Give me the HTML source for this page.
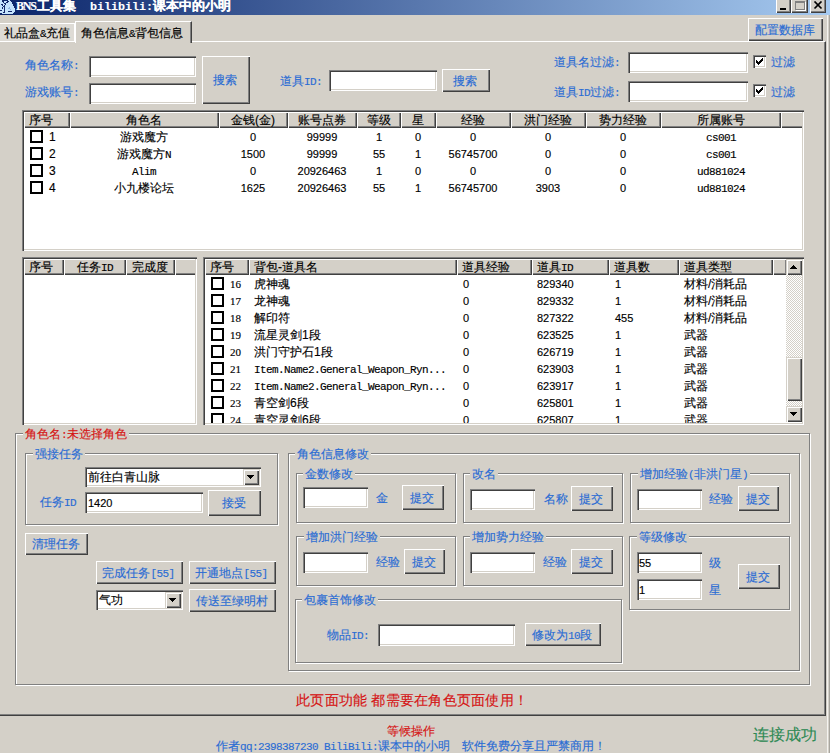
<!DOCTYPE html><html><head><meta charset="utf-8"><style>
html,body{margin:0;padding:0}
body{width:830px;height:753px;overflow:hidden;background:#d4d0c8;position:relative;font-family:"Liberation Sans",sans-serif;font-size:12px;color:#000}
.a{position:absolute;box-sizing:border-box}
.t{white-space:nowrap;line-height:14px;font-size:12px;-webkit-text-stroke:0.15px currentColor}
.blue{color:#2a6cd4}
.red{color:#d41414}
.tb{background:#fff;box-shadow:inset 1px 1px #808080,inset 2px 2px #404040,inset -1px -1px #fff,inset -2px -2px #d4d0c8}
.btn{background:#d4d0c8;box-shadow:inset 1px 1px #fff,inset -1px -1px #404040,inset -2px -2px #808080}
.grp{border:1px solid #808080;box-shadow:1px 1px #fff,inset 1px 1px #fff}
.gt{background:#d4d0c8}
.chk{background:#fff;border:2px solid #000}
.mono{font-family:"Liberation Mono",monospace;font-size:10px}
.sbtn{background:#d4d0c8;box-shadow:inset 1px 1px #d4d0c8,inset 2px 2px #fff,inset -1px -1px #404040,inset -2px -2px #808080}
.hdr{background:#d4d0c8;box-shadow:inset 1px 1px #fff,inset -1px -1px #404040,inset -2px -2px #808080}
.hdrl{background:#d4d0c8;box-shadow:inset 1px 1px #fff,inset 0 -1px #404040,inset 0 -2px #808080}
</style></head><body>

<div class="a " style="left:0px;top:0px;width:830px;height:15px;background:linear-gradient(to right,#0a246a,#a6caf0)"></div>
<svg class="a" style="left:0;top:0" width="15" height="14" shape-rendering="crispEdges"><rect x="0" y="0" width="1" height="1" fill="#c4e2fc"/><rect x="1" y="0" width="1" height="1" fill="#c4e2fc"/><rect x="2" y="0" width="1" height="1" fill="#14286a"/><rect x="8" y="0" width="1" height="1" fill="#c4e2fc"/><rect x="9" y="0" width="1" height="1" fill="#c4e2fc"/><rect x="0" y="1" width="1" height="1" fill="#c4e2fc"/><rect x="1" y="1" width="1" height="1" fill="#c4e2fc"/><rect x="2" y="1" width="1" height="1" fill="#14286a"/><rect x="3" y="1" width="1" height="1" fill="#14286a"/><rect x="4" y="1" width="1" height="1" fill="#c4e2fc"/><rect x="5" y="1" width="1" height="1" fill="#c4e2fc"/><rect x="6" y="1" width="1" height="1" fill="#c4e2fc"/><rect x="7" y="1" width="1" height="1" fill="#14286a"/><rect x="8" y="1" width="1" height="1" fill="#14286a"/><rect x="9" y="1" width="1" height="1" fill="#c4e2fc"/><rect x="10" y="1" width="1" height="1" fill="#c4e2fc"/><rect x="0" y="2" width="1" height="1" fill="#c4e2fc"/><rect x="1" y="2" width="1" height="1" fill="#c4e2fc"/><rect x="2" y="2" width="1" height="1" fill="#c4e2fc"/><rect x="3" y="2" width="1" height="1" fill="#14286a"/><rect x="4" y="2" width="1" height="1" fill="#c4e2fc"/><rect x="5" y="2" width="1" height="1" fill="#c4e2fc"/><rect x="6" y="2" width="1" height="1" fill="#14286a"/><rect x="7" y="2" width="1" height="1" fill="#14286a"/><rect x="8" y="2" width="1" height="1" fill="#c4e2fc"/><rect x="9" y="2" width="1" height="1" fill="#c4e2fc"/><rect x="10" y="2" width="1" height="1" fill="#c4e2fc"/><rect x="11" y="2" width="1" height="1" fill="#c4e2fc"/><rect x="0" y="3" width="1" height="1" fill="#c4e2fc"/><rect x="1" y="3" width="1" height="1" fill="#c4e2fc"/><rect x="2" y="3" width="1" height="1" fill="#c4e2fc"/><rect x="3" y="3" width="1" height="1" fill="#c4e2fc"/><rect x="4" y="3" width="1" height="1" fill="#14286a"/><rect x="5" y="3" width="1" height="1" fill="#14286a"/><rect x="6" y="3" width="1" height="1" fill="#c4e2fc"/><rect x="7" y="3" width="1" height="1" fill="#c4e2fc"/><rect x="8" y="3" width="1" height="1" fill="#c4e2fc"/><rect x="9" y="3" width="1" height="1" fill="#c4e2fc"/><rect x="10" y="3" width="1" height="1" fill="#c4e2fc"/><rect x="11" y="3" width="1" height="1" fill="#c4e2fc"/><rect x="0" y="4" width="1" height="1" fill="#c4e2fc"/><rect x="1" y="4" width="1" height="1" fill="#14286a"/><rect x="2" y="4" width="1" height="1" fill="#14286a"/><rect x="3" y="4" width="1" height="1" fill="#c4e2fc"/><rect x="4" y="4" width="1" height="1" fill="#c4e2fc"/><rect x="5" y="4" width="1" height="1" fill="#14286a"/><rect x="6" y="4" width="1" height="1" fill="#c4e2fc"/><rect x="7" y="4" width="1" height="1" fill="#c4e2fc"/><rect x="8" y="4" width="1" height="1" fill="#c4e2fc"/><rect x="9" y="4" width="1" height="1" fill="#c4e2fc"/><rect x="10" y="4" width="1" height="1" fill="#c4e2fc"/><rect x="11" y="4" width="1" height="1" fill="#c4e2fc"/><rect x="12" y="4" width="1" height="1" fill="#c4e2fc"/><rect x="0" y="5" width="1" height="1" fill="#c4e2fc"/><rect x="1" y="5" width="1" height="1" fill="#c4e2fc"/><rect x="2" y="5" width="1" height="1" fill="#14286a"/><rect x="3" y="5" width="1" height="1" fill="#c4e2fc"/><rect x="4" y="5" width="1" height="1" fill="#14286a"/><rect x="5" y="5" width="1" height="1" fill="#c4e2fc"/><rect x="6" y="5" width="1" height="1" fill="#c4e2fc"/><rect x="7" y="5" width="1" height="1" fill="#c4e2fc"/><rect x="8" y="5" width="1" height="1" fill="#c4e2fc"/><rect x="9" y="5" width="1" height="1" fill="#c4e2fc"/><rect x="10" y="5" width="1" height="1" fill="#c4e2fc"/><rect x="11" y="5" width="1" height="1" fill="#c4e2fc"/><rect x="12" y="5" width="1" height="1" fill="#c4e2fc"/><rect x="0" y="6" width="1" height="1" fill="#c4e2fc"/><rect x="1" y="6" width="1" height="1" fill="#c4e2fc"/><rect x="2" y="6" width="1" height="1" fill="#c4e2fc"/><rect x="3" y="6" width="1" height="1" fill="#14286a"/><rect x="4" y="6" width="1" height="1" fill="#14286a"/><rect x="5" y="6" width="1" height="1" fill="#c4e2fc"/><rect x="6" y="6" width="1" height="1" fill="#c4e2fc"/><rect x="7" y="6" width="1" height="1" fill="#c4e2fc"/><rect x="8" y="6" width="1" height="1" fill="#c4e2fc"/><rect x="9" y="6" width="1" height="1" fill="#c4e2fc"/><rect x="10" y="6" width="1" height="1" fill="#c4e2fc"/><rect x="11" y="6" width="1" height="1" fill="#c4e2fc"/><rect x="12" y="6" width="1" height="1" fill="#c4e2fc"/><rect x="13" y="6" width="1" height="1" fill="#c4e2fc"/><rect x="0" y="7" width="1" height="1" fill="#c4e2fc"/><rect x="1" y="7" width="1" height="1" fill="#c4e2fc"/><rect x="2" y="7" width="1" height="1" fill="#14286a"/><rect x="3" y="7" width="1" height="1" fill="#c4e2fc"/><rect x="4" y="7" width="1" height="1" fill="#14286a"/><rect x="5" y="7" width="1" height="1" fill="#c4e2fc"/><rect x="6" y="7" width="1" height="1" fill="#c4e2fc"/><rect x="7" y="7" width="1" height="1" fill="#c4e2fc"/><rect x="8" y="7" width="1" height="1" fill="#c4e2fc"/><rect x="9" y="7" width="1" height="1" fill="#8fb4e0"/><rect x="10" y="7" width="1" height="1" fill="#c4e2fc"/><rect x="11" y="7" width="1" height="1" fill="#c4e2fc"/><rect x="12" y="7" width="1" height="1" fill="#c4e2fc"/><rect x="13" y="7" width="1" height="1" fill="#c4e2fc"/><rect x="0" y="8" width="1" height="1" fill="#c4e2fc"/><rect x="1" y="8" width="1" height="1" fill="#c4e2fc"/><rect x="2" y="8" width="1" height="1" fill="#14286a"/><rect x="3" y="8" width="1" height="1" fill="#c4e2fc"/><rect x="4" y="8" width="1" height="1" fill="#14286a"/><rect x="5" y="8" width="1" height="1" fill="#c4e2fc"/><rect x="6" y="8" width="1" height="1" fill="#c4e2fc"/><rect x="7" y="8" width="1" height="1" fill="#c4e2fc"/><rect x="8" y="8" width="1" height="1" fill="#8fb4e0"/><rect x="9" y="8" width="1" height="1" fill="#8fb4e0"/><rect x="10" y="8" width="1" height="1" fill="#c4e2fc"/><rect x="11" y="8" width="1" height="1" fill="#c4e2fc"/><rect x="12" y="8" width="1" height="1" fill="#c4e2fc"/><rect x="13" y="8" width="1" height="1" fill="#c4e2fc"/><rect x="14" y="8" width="1" height="1" fill="#c4e2fc"/><rect x="0" y="9" width="1" height="1" fill="#c4e2fc"/><rect x="1" y="9" width="1" height="1" fill="#c4e2fc"/><rect x="2" y="9" width="1" height="1" fill="#c4e2fc"/><rect x="3" y="9" width="1" height="1" fill="#c4e2fc"/><rect x="4" y="9" width="1" height="1" fill="#14286a"/><rect x="5" y="9" width="1" height="1" fill="#c4e2fc"/><rect x="6" y="9" width="1" height="1" fill="#c4e2fc"/><rect x="7" y="9" width="1" height="1" fill="#c4e2fc"/><rect x="8" y="9" width="1" height="1" fill="#c4e2fc"/><rect x="9" y="9" width="1" height="1" fill="#c4e2fc"/><rect x="10" y="9" width="1" height="1" fill="#8fb4e0"/><rect x="11" y="9" width="1" height="1" fill="#c4e2fc"/><rect x="12" y="9" width="1" height="1" fill="#c4e2fc"/><rect x="13" y="9" width="1" height="1" fill="#c4e2fc"/><rect x="14" y="9" width="1" height="1" fill="#c4e2fc"/><rect x="0" y="10" width="1" height="1" fill="#14286a"/><rect x="1" y="10" width="1" height="1" fill="#14286a"/><rect x="2" y="10" width="1" height="1" fill="#c4e2fc"/><rect x="3" y="10" width="1" height="1" fill="#c4e2fc"/><rect x="4" y="10" width="1" height="1" fill="#14286a"/><rect x="5" y="10" width="1" height="1" fill="#c4e2fc"/><rect x="6" y="10" width="1" height="1" fill="#c4e2fc"/><rect x="7" y="10" width="1" height="1" fill="#c4e2fc"/><rect x="8" y="10" width="1" height="1" fill="#c4e2fc"/><rect x="9" y="10" width="1" height="1" fill="#c4e2fc"/><rect x="10" y="10" width="1" height="1" fill="#c4e2fc"/><rect x="11" y="10" width="1" height="1" fill="#c4e2fc"/><rect x="12" y="10" width="1" height="1" fill="#c4e2fc"/><rect x="13" y="10" width="1" height="1" fill="#c4e2fc"/><rect x="14" y="10" width="1" height="1" fill="#c4e2fc"/><rect x="0" y="11" width="1" height="1" fill="#c4e2fc"/><rect x="1" y="11" width="1" height="1" fill="#c4e2fc"/><rect x="2" y="11" width="1" height="1" fill="#c4e2fc"/><rect x="3" y="11" width="1" height="1" fill="#c4e2fc"/><rect x="4" y="11" width="1" height="1" fill="#14286a"/><rect x="5" y="11" width="1" height="1" fill="#c4e2fc"/><rect x="6" y="11" width="1" height="1" fill="#c4e2fc"/><rect x="7" y="11" width="1" height="1" fill="#c4e2fc"/><rect x="8" y="11" width="1" height="1" fill="#14286a"/><rect x="9" y="11" width="1" height="1" fill="#14286a"/><rect x="10" y="11" width="1" height="1" fill="#14286a"/><rect x="11" y="11" width="1" height="1" fill="#14286a"/><rect x="12" y="11" width="1" height="1" fill="#c4e2fc"/><rect x="13" y="11" width="1" height="1" fill="#c4e2fc"/><rect x="14" y="11" width="1" height="1" fill="#c4e2fc"/><rect x="0" y="12" width="1" height="1" fill="#c4e2fc"/><rect x="1" y="12" width="1" height="1" fill="#c4e2fc"/><rect x="2" y="12" width="1" height="1" fill="#c4e2fc"/><rect x="3" y="12" width="1" height="1" fill="#14286a"/><rect x="4" y="12" width="1" height="1" fill="#14286a"/><rect x="5" y="12" width="1" height="1" fill="#c4e2fc"/><rect x="6" y="12" width="1" height="1" fill="#c4e2fc"/><rect x="7" y="12" width="1" height="1" fill="#c4e2fc"/><rect x="8" y="12" width="1" height="1" fill="#c4e2fc"/><rect x="9" y="12" width="1" height="1" fill="#c4e2fc"/><rect x="10" y="12" width="1" height="1" fill="#c4e2fc"/><rect x="11" y="12" width="1" height="1" fill="#c4e2fc"/><rect x="12" y="12" width="1" height="1" fill="#c4e2fc"/><rect x="13" y="12" width="1" height="1" fill="#c4e2fc"/><rect x="2" y="13" width="1" height="1" fill="#c4e2fc"/><rect x="3" y="13" width="1" height="1" fill="#c4e2fc"/><rect x="4" y="13" width="1" height="1" fill="#c4e2fc"/><rect x="5" y="13" width="1" height="1" fill="#c4e2fc"/><rect x="6" y="13" width="1" height="1" fill="#c4e2fc"/><rect x="7" y="13" width="1" height="1" fill="#c4e2fc"/><rect x="8" y="13" width="1" height="1" fill="#c4e2fc"/><rect x="9" y="13" width="1" height="1" fill="#c4e2fc"/><rect x="10" y="13" width="1" height="1" fill="#c4e2fc"/><rect x="11" y="13" width="1" height="1" fill="#c4e2fc"/><rect x="12" y="13" width="1" height="1" fill="#c4e2fc"/></svg>
<div class="a t" style="left:16px;top:-1px;color:#fff;font-weight:bold;font-size:13px;line-height:14px"><span style="font-family:'Liberation Serif',serif;font-size:12px;letter-spacing:-1.2px">BNS</span><span style="margin-left:1px">工具集</span></div>
<div class="a t" style="left:90px;top:-1px;color:#fff;font-weight:bold;font-size:13px;line-height:14px"><span style="font-family:'Liberation Mono',monospace;font-size:11.7px;letter-spacing:0px">bilibili:</span>课本中的小明</div>
<div class="a btn" style="left:776px;top:-2px;width:15px;height:15px;"><div class="a" style="left:4px;top:10px;width:6px;height:2px;background:#000"></div></div>
<div class="a btn" style="left:791px;top:-2px;width:17px;height:15px;"><div class="a" style="left:4px;top:3px;width:10px;height:9px;border:1px solid #808080;border-top-width:2px;box-shadow:1px 1px #fff"></div></div>
<div class="a btn" style="left:810px;top:-2px;width:16px;height:15px;"><svg class="a" style="left:3px;top:3px" width="10" height="9"><path d="M1.5 0.5 L8.5 7.5 M8.5 0.5 L1.5 7.5" stroke="#000" stroke-width="1.7"/></svg></div>
<div class="a " style="left:827px;top:15px;width:1px;height:738px;background:#f4f3f0"></div>
<div class="a " style="left:829px;top:15px;width:1px;height:738px;background:#a8a6a0"></div>
<div class="a " style="left:-4px;top:41px;width:830px;height:675px;border-top:1px solid #fff;border-right:1px solid #404040;border-bottom:1px solid #404040;box-shadow:inset -1px -1px #808080"></div>
<div class="a " style="left:-3px;top:23px;width:78px;height:18px;border-top:1px solid #fff;border-left:1px solid #fff;border-right:1px solid #fff;background:#dedbd5"></div>
<div class="a t " style="left:4px;top:26px;font-size:12px;line-height:14px;">礼品盒<span style='font-family:"Liberation Mono",monospace;font-size:11px;letter-spacing:-0.6px;line-height:0'>&amp;</span>充值</div>
<div class="a " style="left:75px;top:21px;width:117px;height:22px;border-top:1px solid #fff;border-left:1px solid #fff;border-right:1px solid #404040;box-shadow:inset -1px 0 #808080;background:#d4d0c8"></div>
<div class="a t " style="left:81px;top:26px;font-size:12px;line-height:14px;">角色信息<span style='font-family:"Liberation Mono",monospace;font-size:11px;letter-spacing:-0.6px;line-height:0'>&amp;</span>背包信息</div>
<div class="a btn" style="left:748px;top:18px;width:75px;height:23px"><div class="a t blue" style="left:-1px;right:1px;top:4.5px;text-align:center">配置数据库</div></div>
<div class="a t blue" style="left:25px;top:58px;font-size:12px;line-height:14px;">角色名称<span style='font-family:"Liberation Mono",monospace;font-size:11px;letter-spacing:-0.6px;line-height:0'>:</span></div>
<div class="a t blue" style="left:25px;top:85px;font-size:12px;line-height:14px;">游戏账号<span style='font-family:"Liberation Mono",monospace;font-size:11px;letter-spacing:-0.6px;line-height:0'>:</span></div>
<div class="a tb" style="left:89px;top:56px;width:107px;height:21px;"></div>
<div class="a tb" style="left:89px;top:83px;width:107px;height:21px;"></div>
<div class="a btn" style="left:202px;top:56px;width:48px;height:48px"><div class="a t blue" style="left:-1px;right:1px;top:17.0px;text-align:center">搜索</div></div>
<div class="a t blue" style="left:280px;top:74px;font-size:12px;line-height:14px;">道具<span style='font-family:"Liberation Mono",monospace;font-size:11px;letter-spacing:-0.6px;line-height:0'>ID:</span></div>
<div class="a tb" style="left:329px;top:70px;width:108px;height:21px;"></div>
<div class="a btn" style="left:442px;top:69px;width:48px;height:23px"><div class="a t blue" style="left:-1px;right:1px;top:4.5px;text-align:center">搜索</div></div>
<div class="a t blue" style="left:554px;top:55px;font-size:12px;line-height:14px;">道具名过滤<span style='font-family:"Liberation Mono",monospace;font-size:11px;letter-spacing:-0.6px;line-height:0'>:</span></div>
<div class="a t blue" style="left:554px;top:85px;font-size:12px;line-height:14px;">道具<span style='font-family:"Liberation Mono",monospace;font-size:11px;letter-spacing:-0.6px;line-height:0'>ID</span>过滤<span style='font-family:"Liberation Mono",monospace;font-size:11px;letter-spacing:-0.6px;line-height:0'>:</span></div>
<div class="a tb" style="left:628px;top:52px;width:120px;height:21px;"></div>
<div class="a tb" style="left:628px;top:81px;width:120px;height:21px;"></div>
<div class="a tb" style="left:753px;top:55px;width:13px;height:13px;"><svg width="7" height="7" style="position:absolute;left:3px;top:3px" shape-rendering="crispEdges"><rect x="6" y="0" width="1" height="1"/><rect x="5" y="1" width="1" height="1"/><rect x="6" y="1" width="1" height="1"/><rect x="0" y="2" width="1" height="1"/><rect x="4" y="2" width="1" height="1"/><rect x="5" y="2" width="1" height="1"/><rect x="6" y="2" width="1" height="1"/><rect x="0" y="3" width="1" height="1"/><rect x="1" y="3" width="1" height="1"/><rect x="3" y="3" width="1" height="1"/><rect x="4" y="3" width="1" height="1"/><rect x="5" y="3" width="1" height="1"/><rect x="0" y="4" width="1" height="1"/><rect x="1" y="4" width="1" height="1"/><rect x="2" y="4" width="1" height="1"/><rect x="3" y="4" width="1" height="1"/><rect x="4" y="4" width="1" height="1"/><rect x="1" y="5" width="1" height="1"/><rect x="2" y="5" width="1" height="1"/><rect x="3" y="5" width="1" height="1"/><rect x="2" y="6" width="1" height="1"/></svg></div>
<div class="a tb" style="left:753px;top:84px;width:13px;height:13px;"><svg width="7" height="7" style="position:absolute;left:3px;top:3px" shape-rendering="crispEdges"><rect x="6" y="0" width="1" height="1"/><rect x="5" y="1" width="1" height="1"/><rect x="6" y="1" width="1" height="1"/><rect x="0" y="2" width="1" height="1"/><rect x="4" y="2" width="1" height="1"/><rect x="5" y="2" width="1" height="1"/><rect x="6" y="2" width="1" height="1"/><rect x="0" y="3" width="1" height="1"/><rect x="1" y="3" width="1" height="1"/><rect x="3" y="3" width="1" height="1"/><rect x="4" y="3" width="1" height="1"/><rect x="5" y="3" width="1" height="1"/><rect x="0" y="4" width="1" height="1"/><rect x="1" y="4" width="1" height="1"/><rect x="2" y="4" width="1" height="1"/><rect x="3" y="4" width="1" height="1"/><rect x="4" y="4" width="1" height="1"/><rect x="1" y="5" width="1" height="1"/><rect x="2" y="5" width="1" height="1"/><rect x="3" y="5" width="1" height="1"/><rect x="2" y="6" width="1" height="1"/></svg></div>
<div class="a t blue" style="left:771px;top:55px;font-size:12px;line-height:14px;">过滤</div>
<div class="a t blue" style="left:771px;top:85px;font-size:12px;line-height:14px;">过滤</div>
<div class="a tb" style="left:22px;top:110px;width:782px;height:141px;"></div>
<div class="a hdr" style="left:24px;top:112px;width:46px;height:16px;"></div>
<div class="a t " style="left:29px;top:113px;font-size:12px;line-height:14px;">序号</div>
<div class="a hdr" style="left:70px;top:112px;width:149px;height:16px;"></div>
<div class="a t " style="left:44px;top:113px;width:200px;text-align:center;">角色名</div>
<div class="a hdr" style="left:219px;top:112px;width:69px;height:16px;"></div>
<div class="a t " style="left:153px;top:113px;width:200px;text-align:center;">金钱(金)</div>
<div class="a hdr" style="left:288px;top:112px;width:69px;height:16px;"></div>
<div class="a t " style="left:222px;top:113px;width:200px;text-align:center;">账号点券</div>
<div class="a hdr" style="left:357px;top:112px;width:44px;height:16px;"></div>
<div class="a t " style="left:279px;top:113px;width:200px;text-align:center;">等级</div>
<div class="a hdr" style="left:401px;top:112px;width:35px;height:16px;"></div>
<div class="a t " style="left:318px;top:113px;width:200px;text-align:center;">星</div>
<div class="a hdr" style="left:436px;top:112px;width:75px;height:16px;"></div>
<div class="a t " style="left:373px;top:113px;width:200px;text-align:center;">经验</div>
<div class="a hdr" style="left:511px;top:112px;width:75px;height:16px;"></div>
<div class="a t " style="left:448px;top:113px;width:200px;text-align:center;">洪门经验</div>
<div class="a hdr" style="left:586px;top:112px;width:75px;height:16px;"></div>
<div class="a t " style="left:523px;top:113px;width:200px;text-align:center;">势力经验</div>
<div class="a hdr" style="left:661px;top:112px;width:120px;height:16px;"></div>
<div class="a t " style="left:621px;top:113px;width:200px;text-align:center;">所属账号</div>
<div class="a hdrl" style="left:781px;top:112px;width:21px;height:16px;"></div>
<div class="a chk" style="left:30px;top:130px;width:13px;height:13px;"></div>
<div class="a t " style="left:49px;top:130px;font-size:12px;line-height:14px;font-family:"Liberation Serif",serif;font-size:11px">1</div>
<div class="a t " style="left:44px;top:130px;width:200px;text-align:center;">游戏魔方</div>
<div class="a t " style="left:153px;top:130px;width:200px;text-align:center;font-size:11px">0</div>
<div class="a t " style="left:222px;top:130px;width:200px;text-align:center;font-size:11px">99999</div>
<div class="a t " style="left:279px;top:130px;width:200px;text-align:center;font-size:11px">1</div>
<div class="a t " style="left:318px;top:130px;width:200px;text-align:center;font-size:11px">0</div>
<div class="a t " style="left:373px;top:130px;width:200px;text-align:center;font-size:11px">0</div>
<div class="a t " style="left:448px;top:130px;width:200px;text-align:center;font-size:11px">0</div>
<div class="a t " style="left:523px;top:130px;width:200px;text-align:center;font-size:11px">0</div>
<div class="a t " style="left:621px;top:130px;width:200px;text-align:center;"><span style='font-family:"Liberation Mono",monospace;font-size:11px;letter-spacing:-0.6px;line-height:0'>cs001</span></div>
<div class="a chk" style="left:30px;top:147px;width:13px;height:13px;"></div>
<div class="a t " style="left:49px;top:147px;font-size:12px;line-height:14px;font-family:"Liberation Serif",serif;font-size:11px">2</div>
<div class="a t " style="left:44px;top:147px;width:200px;text-align:center;">游戏魔方<span style='font-family:"Liberation Mono",monospace;font-size:11px;letter-spacing:-0.6px;line-height:0'>N</span></div>
<div class="a t " style="left:153px;top:147px;width:200px;text-align:center;font-size:11px">1500</div>
<div class="a t " style="left:222px;top:147px;width:200px;text-align:center;font-size:11px">99999</div>
<div class="a t " style="left:279px;top:147px;width:200px;text-align:center;font-size:11px">55</div>
<div class="a t " style="left:318px;top:147px;width:200px;text-align:center;font-size:11px">1</div>
<div class="a t " style="left:373px;top:147px;width:200px;text-align:center;font-size:11px">56745700</div>
<div class="a t " style="left:448px;top:147px;width:200px;text-align:center;font-size:11px">0</div>
<div class="a t " style="left:523px;top:147px;width:200px;text-align:center;font-size:11px">0</div>
<div class="a t " style="left:621px;top:147px;width:200px;text-align:center;"><span style='font-family:"Liberation Mono",monospace;font-size:11px;letter-spacing:-0.6px;line-height:0'>cs001</span></div>
<div class="a chk" style="left:30px;top:164px;width:13px;height:13px;"></div>
<div class="a t " style="left:49px;top:164px;font-size:12px;line-height:14px;font-family:"Liberation Serif",serif;font-size:11px">3</div>
<div class="a t " style="left:44px;top:164px;width:200px;text-align:center;"><span style='font-family:"Liberation Mono",monospace;font-size:11px;letter-spacing:-0.6px;line-height:0'>Alim</span></div>
<div class="a t " style="left:153px;top:164px;width:200px;text-align:center;font-size:11px">0</div>
<div class="a t " style="left:222px;top:164px;width:200px;text-align:center;font-size:11px">20926463</div>
<div class="a t " style="left:279px;top:164px;width:200px;text-align:center;font-size:11px">1</div>
<div class="a t " style="left:318px;top:164px;width:200px;text-align:center;font-size:11px">0</div>
<div class="a t " style="left:373px;top:164px;width:200px;text-align:center;font-size:11px">0</div>
<div class="a t " style="left:448px;top:164px;width:200px;text-align:center;font-size:11px">0</div>
<div class="a t " style="left:523px;top:164px;width:200px;text-align:center;font-size:11px">0</div>
<div class="a t " style="left:621px;top:164px;width:200px;text-align:center;"><span style='font-family:"Liberation Mono",monospace;font-size:11px;letter-spacing:-0.6px;line-height:0'>ud881024</span></div>
<div class="a chk" style="left:30px;top:181px;width:13px;height:13px;"></div>
<div class="a t " style="left:49px;top:181px;font-size:12px;line-height:14px;font-family:"Liberation Serif",serif;font-size:11px">4</div>
<div class="a t " style="left:44px;top:181px;width:200px;text-align:center;">小九楼论坛</div>
<div class="a t " style="left:153px;top:181px;width:200px;text-align:center;font-size:11px">1625</div>
<div class="a t " style="left:222px;top:181px;width:200px;text-align:center;font-size:11px">20926463</div>
<div class="a t " style="left:279px;top:181px;width:200px;text-align:center;font-size:11px">55</div>
<div class="a t " style="left:318px;top:181px;width:200px;text-align:center;font-size:11px">1</div>
<div class="a t " style="left:373px;top:181px;width:200px;text-align:center;font-size:11px">56745700</div>
<div class="a t " style="left:448px;top:181px;width:200px;text-align:center;font-size:11px">3903</div>
<div class="a t " style="left:523px;top:181px;width:200px;text-align:center;font-size:11px">0</div>
<div class="a t " style="left:621px;top:181px;width:200px;text-align:center;"><span style='font-family:"Liberation Mono",monospace;font-size:11px;letter-spacing:-0.6px;line-height:0'>ud881024</span></div>
<div class="a tb" style="left:22px;top:257px;width:175px;height:168px;"></div>
<div class="a hdr" style="left:24px;top:259px;width:40px;height:16px;"></div>
<div class="a t " style="left:29px;top:260px;font-size:12px;line-height:14px;">序号</div>
<div class="a hdr" style="left:64px;top:259px;width:62px;height:16px;"></div>
<div class="a t " style="left:-5px;top:260px;width:200px;text-align:center;">任务<span style='font-family:"Liberation Mono",monospace;font-size:11px;letter-spacing:-0.6px;line-height:0'>ID</span></div>
<div class="a hdr" style="left:126px;top:259px;width:49px;height:16px;"></div>
<div class="a t " style="left:50px;top:260px;width:200px;text-align:center;">完成度</div>
<div class="a hdrl" style="left:175px;top:259px;width:20px;height:16px;"></div>
<div class="a tb" style="left:203px;top:257px;width:601px;height:168px;"></div>
<div class="a hdr" style="left:205px;top:259px;width:44px;height:16px;"></div>
<div class="a t " style="left:210px;top:260px;font-size:12px;line-height:14px;">序号</div>
<div class="a hdr" style="left:249px;top:259px;width:208px;height:16px;"></div>
<div class="a t " style="left:254px;top:260px;font-size:12px;line-height:14px;">背包-道具名</div>
<div class="a hdr" style="left:457px;top:259px;width:75px;height:16px;"></div>
<div class="a t " style="left:462px;top:260px;font-size:12px;line-height:14px;">道具经验</div>
<div class="a hdr" style="left:532px;top:259px;width:77px;height:16px;"></div>
<div class="a t " style="left:537px;top:260px;font-size:12px;line-height:14px;">道具<span style='font-family:"Liberation Mono",monospace;font-size:11px;letter-spacing:-0.6px;line-height:0'>ID</span></div>
<div class="a hdr" style="left:609px;top:259px;width:70px;height:16px;"></div>
<div class="a t " style="left:614px;top:260px;font-size:12px;line-height:14px;">道具数</div>
<div class="a hdr" style="left:679px;top:259px;width:94px;height:16px;"></div>
<div class="a t " style="left:684px;top:260px;font-size:12px;line-height:14px;">道具类型</div>
<div class="a hdr" style="left:773px;top:259px;width:14px;height:16px;"></div>
<div class="a" style="left:205px;top:274px;width:581px;height:149px;overflow:hidden">
<div class="a chk" style="left:6px;top:3px;width:13px;height:13px"></div>
<div class="a t" style="left:25px;top:3px;font-family:'Liberation Serif',serif;font-size:11px">16</div>
<div class="a t" style="left:49px;top:3px">虎神魂</div>
<div class="a t" style="left:258px;top:3px;font-size:11px">0</div>
<div class="a t" style="left:332px;top:3px;font-size:11px">829340</div>
<div class="a t" style="left:410px;top:3px;font-size:11px">1</div>
<div class="a t" style="left:479px;top:3px;">材料/消耗品</div>
<div class="a chk" style="left:6px;top:20px;width:13px;height:13px"></div>
<div class="a t" style="left:25px;top:20px;font-family:'Liberation Serif',serif;font-size:11px">17</div>
<div class="a t" style="left:49px;top:20px">龙神魂</div>
<div class="a t" style="left:258px;top:20px;font-size:11px">0</div>
<div class="a t" style="left:332px;top:20px;font-size:11px">829332</div>
<div class="a t" style="left:410px;top:20px;font-size:11px">1</div>
<div class="a t" style="left:479px;top:20px;">材料/消耗品</div>
<div class="a chk" style="left:6px;top:37px;width:13px;height:13px"></div>
<div class="a t" style="left:25px;top:37px;font-family:'Liberation Serif',serif;font-size:11px">18</div>
<div class="a t" style="left:49px;top:37px">解印符</div>
<div class="a t" style="left:258px;top:37px;font-size:11px">0</div>
<div class="a t" style="left:332px;top:37px;font-size:11px">827322</div>
<div class="a t" style="left:410px;top:37px;font-size:11px">455</div>
<div class="a t" style="left:479px;top:37px;">材料/消耗品</div>
<div class="a chk" style="left:6px;top:54px;width:13px;height:13px"></div>
<div class="a t" style="left:25px;top:54px;font-family:'Liberation Serif',serif;font-size:11px">19</div>
<div class="a t" style="left:49px;top:54px">流星灵剑1段</div>
<div class="a t" style="left:258px;top:54px;font-size:11px">0</div>
<div class="a t" style="left:332px;top:54px;font-size:11px">623525</div>
<div class="a t" style="left:410px;top:54px;font-size:11px">1</div>
<div class="a t" style="left:479px;top:54px;">武器</div>
<div class="a chk" style="left:6px;top:71px;width:13px;height:13px"></div>
<div class="a t" style="left:25px;top:71px;font-family:'Liberation Serif',serif;font-size:11px">20</div>
<div class="a t" style="left:49px;top:71px">洪门守护石1段</div>
<div class="a t" style="left:258px;top:71px;font-size:11px">0</div>
<div class="a t" style="left:332px;top:71px;font-size:11px">626719</div>
<div class="a t" style="left:410px;top:71px;font-size:11px">1</div>
<div class="a t" style="left:479px;top:71px;">武器</div>
<div class="a chk" style="left:6px;top:88px;width:13px;height:13px"></div>
<div class="a t" style="left:25px;top:88px;font-family:'Liberation Serif',serif;font-size:11px">21</div>
<div class="a t" style="left:49px;top:88px"><span style='font-family:"Liberation Mono",monospace;font-size:11px;letter-spacing:-0.6px;line-height:0'>Item.Name2.General_Weapon_Ryn...</span></div>
<div class="a t" style="left:258px;top:88px;font-size:11px">0</div>
<div class="a t" style="left:332px;top:88px;font-size:11px">623903</div>
<div class="a t" style="left:410px;top:88px;font-size:11px">1</div>
<div class="a t" style="left:479px;top:88px;">武器</div>
<div class="a chk" style="left:6px;top:105px;width:13px;height:13px"></div>
<div class="a t" style="left:25px;top:105px;font-family:'Liberation Serif',serif;font-size:11px">22</div>
<div class="a t" style="left:49px;top:105px"><span style='font-family:"Liberation Mono",monospace;font-size:11px;letter-spacing:-0.6px;line-height:0'>Item.Name2.General_Weapon_Ryn...</span></div>
<div class="a t" style="left:258px;top:105px;font-size:11px">0</div>
<div class="a t" style="left:332px;top:105px;font-size:11px">623917</div>
<div class="a t" style="left:410px;top:105px;font-size:11px">1</div>
<div class="a t" style="left:479px;top:105px;">武器</div>
<div class="a chk" style="left:6px;top:122px;width:13px;height:13px"></div>
<div class="a t" style="left:25px;top:122px;font-family:'Liberation Serif',serif;font-size:11px">23</div>
<div class="a t" style="left:49px;top:122px">青空剑6段</div>
<div class="a t" style="left:258px;top:122px;font-size:11px">0</div>
<div class="a t" style="left:332px;top:122px;font-size:11px">625801</div>
<div class="a t" style="left:410px;top:122px;font-size:11px">1</div>
<div class="a t" style="left:479px;top:122px;">武器</div>
<div class="a chk" style="left:6px;top:139px;width:13px;height:13px"></div>
<div class="a t" style="left:25px;top:139px;font-family:'Liberation Serif',serif;font-size:11px">24</div>
<div class="a t" style="left:49px;top:139px">青空灵剑6段</div>
<div class="a t" style="left:258px;top:139px;font-size:11px">0</div>
<div class="a t" style="left:332px;top:139px;font-size:11px">625807</div>
<div class="a t" style="left:410px;top:139px;font-size:11px">1</div>
<div class="a t" style="left:479px;top:139px;">武器</div>
</div>
<div class="a " style="left:786px;top:274px;width:16px;height:148px;background-color:#eeeae4;background-image:repeating-conic-gradient(#fff 0 25%,#d4d0c8 0 50%);background-size:2px 2px"></div>
<div class="a sbtn" style="left:786px;top:259px;width:16px;height:16px;"><svg width="16" height="16" style="position:absolute;left:0;top:0" shape-rendering="crispEdges"><path d="M4 10 L11 10 L11 9 L10 9 L10 8 L9 8 L9 7 L8 7 L8 6 L7 6 L7 7 L6 7 L6 8 L5 8 L5 9 L4 9 Z" fill="#000"/></svg></div>
<div class="a sbtn" style="left:786px;top:357px;width:16px;height:44px;"></div>
<div class="a sbtn" style="left:786px;top:406px;width:16px;height:16px;"><svg width="16" height="16" style="position:absolute;left:0;top:0" shape-rendering="crispEdges"><path d="M4 6 L11 6 L11 7 L10 7 L10 8 L9 8 L9 9 L8 9 L8 10 L7 10 L7 9 L6 9 L6 8 L5 8 L5 7 L4 7 Z" fill="#000"/></svg></div>
<div class="a grp" style="left:15px;top:433px;width:795px;height:252px;"></div>
<div class="a t gt red" style="left:23px;top:427px;padding:0 2px">角色名<span style='font-family:"Liberation Mono",monospace;font-size:11px;letter-spacing:-0.6px;line-height:0'>:</span>未选择角色</div>
<div class="a grp" style="left:25px;top:453px;width:253px;height:72px;"></div>
<div class="a t gt blue" style="left:33px;top:447px;padding:0 2px">强接任务</div>
<div class="a tb" style="left:85px;top:467px;width:176px;height:20px;"><div class="a t" style="left:3px;top:2.5px">前往白青山脉</div></div>
<div class="a sbtn" style="left:243px;top:469px;width:16px;height:16px;"><svg width="16" height="16" style="position:absolute;left:0;top:0" shape-rendering="crispEdges"><path d="M4 6 L11 6 L11 7 L10 7 L10 8 L9 8 L9 9 L8 9 L8 10 L7 10 L7 9 L6 9 L6 8 L5 8 L5 7 L4 7 Z" fill="#000"/></svg></div>
<div class="a t blue" style="left:40px;top:495px;font-size:12px;line-height:14px;">任务<span style='font-family:"Liberation Mono",monospace;font-size:11px;letter-spacing:-0.6px;line-height:0'>ID</span></div>
<div class="a tb" style="left:85px;top:492px;width:118px;height:21px;"><div class="a t" style="left:3px;top:4px;font-size:11px">1420</div></div>
<div class="a btn" style="left:208px;top:490px;width:53px;height:26px"><div class="a t blue" style="left:-1px;right:1px;top:6.0px;text-align:center">接受</div></div>
<div class="a btn" style="left:25px;top:533px;width:63px;height:22px"><div class="a t blue" style="left:-1px;right:1px;top:4.0px;text-align:center">清理任务</div></div>
<div class="a btn" style="left:96px;top:561px;width:87px;height:23px"><div class="a t blue" style="left:-1px;right:1px;top:4.5px;text-align:center">完成任务<span style='font-family:"Liberation Mono",monospace;font-size:11px;letter-spacing:-0.6px;line-height:0'>[55]</span></div></div>
<div class="a btn" style="left:189px;top:561px;width:87px;height:23px"><div class="a t blue" style="left:-1px;right:1px;top:4.5px;text-align:center">开通地点<span style='font-family:"Liberation Mono",monospace;font-size:11px;letter-spacing:-0.6px;line-height:0'>[55]</span></div></div>
<div class="a tb" style="left:96px;top:590px;width:87px;height:20px;"><div class="a t" style="left:3px;top:2.5px">气功</div></div>
<div class="a sbtn" style="left:165px;top:592px;width:16px;height:16px;"><svg width="16" height="16" style="position:absolute;left:0;top:0" shape-rendering="crispEdges"><path d="M4 6 L11 6 L11 7 L10 7 L10 8 L9 8 L9 9 L8 9 L8 10 L7 10 L7 9 L6 9 L6 8 L5 8 L5 7 L4 7 Z" fill="#000"/></svg></div>
<div class="a btn" style="left:189px;top:589px;width:87px;height:23px"><div class="a t blue" style="left:-1px;right:1px;top:4.5px;text-align:center">传送至绿明村</div></div>
<div class="a grp" style="left:288px;top:453px;width:512px;height:218px;"></div>
<div class="a t gt blue" style="left:295px;top:447px;padding:0 2px">角色信息修改</div>
<div class="a grp" style="left:296px;top:473px;width:160px;height:50px;"></div>
<div class="a t gt blue" style="left:303px;top:467px;padding:0 2px">金数修改</div>
<div class="a tb" style="left:303px;top:487px;width:65px;height:21px;"></div>
<div class="a t blue" style="left:376px;top:491px;font-size:12px;line-height:14px;">金</div>
<div class="a btn" style="left:402px;top:485px;width:42px;height:25px"><div class="a t blue" style="left:-1px;right:1px;top:5.5px;text-align:center">提交</div></div>
<div class="a grp" style="left:463px;top:473px;width:160px;height:50px;"></div>
<div class="a t gt blue" style="left:470px;top:467px;padding:0 2px">改名</div>
<div class="a tb" style="left:470px;top:489px;width:65px;height:21px;"></div>
<div class="a t blue" style="left:544px;top:492px;font-size:12px;line-height:14px;">名称</div>
<div class="a btn" style="left:571px;top:486px;width:42px;height:25px"><div class="a t blue" style="left:-1px;right:1px;top:5.5px;text-align:center">提交</div></div>
<div class="a grp" style="left:630px;top:473px;width:160px;height:50px;"></div>
<div class="a t gt blue" style="left:638px;top:467px;padding:0 2px">增加经验<span style='font-family:"Liberation Mono",monospace;font-size:11px;letter-spacing:-0.6px;line-height:0'>(</span>非洪门星<span style='font-family:"Liberation Mono",monospace;font-size:11px;letter-spacing:-0.6px;line-height:0'>)</span></div>
<div class="a tb" style="left:637px;top:489px;width:65px;height:21px;"></div>
<div class="a t blue" style="left:709px;top:492px;font-size:12px;line-height:14px;">经验</div>
<div class="a btn" style="left:738px;top:486px;width:41px;height:25px"><div class="a t blue" style="left:-1px;right:1px;top:5.5px;text-align:center">提交</div></div>
<div class="a grp" style="left:296px;top:536px;width:160px;height:50px;"></div>
<div class="a t gt blue" style="left:304px;top:530px;padding:0 2px">增加洪门经验</div>
<div class="a tb" style="left:303px;top:552px;width:65px;height:21px;"></div>
<div class="a t blue" style="left:376px;top:555px;font-size:12px;line-height:14px;">经验</div>
<div class="a btn" style="left:404px;top:549px;width:41px;height:25px"><div class="a t blue" style="left:-1px;right:1px;top:5.5px;text-align:center">提交</div></div>
<div class="a grp" style="left:463px;top:536px;width:160px;height:50px;"></div>
<div class="a t gt blue" style="left:470px;top:530px;padding:0 2px">增加势力经验</div>
<div class="a tb" style="left:470px;top:552px;width:65px;height:21px;"></div>
<div class="a t blue" style="left:543px;top:555px;font-size:12px;line-height:14px;">经验</div>
<div class="a btn" style="left:571px;top:549px;width:42px;height:25px"><div class="a t blue" style="left:-1px;right:1px;top:5.5px;text-align:center">提交</div></div>
<div class="a grp" style="left:629px;top:536px;width:161px;height:74px;"></div>
<div class="a t gt blue" style="left:637px;top:530px;padding:0 2px">等级修改</div>
<div class="a tb" style="left:637px;top:552px;width:65px;height:21px;"><div class="a t" style="left:2px;top:3.5px;font-size:11px">55</div></div>
<div class="a tb" style="left:637px;top:579px;width:65px;height:21px;"><div class="a t" style="left:2px;top:3.5px;font-size:11px">1</div></div>
<div class="a t blue" style="left:709px;top:556px;font-size:12px;line-height:14px;">级</div>
<div class="a t blue" style="left:709px;top:583px;font-size:12px;line-height:14px;">星</div>
<div class="a btn" style="left:738px;top:564px;width:42px;height:25px"><div class="a t blue" style="left:-1px;right:1px;top:5.5px;text-align:center">提交</div></div>
<div class="a grp" style="left:295px;top:599px;width:327px;height:64px;"></div>
<div class="a t gt blue" style="left:302px;top:593px;padding:0 2px">包裹首饰修改</div>
<div class="a t blue" style="left:327px;top:628px;font-size:12px;line-height:14px;">物品<span style='font-family:"Liberation Mono",monospace;font-size:11px;letter-spacing:-0.6px;line-height:0'>ID:</span></div>
<div class="a tb" style="left:378px;top:624px;width:137px;height:22px;"></div>
<div class="a btn" style="left:525px;top:623px;width:76px;height:23px"><div class="a t blue" style="left:-1px;right:1px;top:4.5px;text-align:center">修改为<span style='font-family:"Liberation Mono",monospace;font-size:11px;letter-spacing:-0.6px;line-height:0'>10</span>段</div></div>
<div class="a t red" style="left:296px;top:693px;font-size:14px;line-height:14px;letter-spacing:0.25px">此页面功能 都需要在角色页面使用！</div>
<div class="a t red" style="left:387px;top:724px;font-size:12px;line-height:14px;">等候操作</div>
<div class="a t blue" style="left:216px;top:739px;font-size:12px;line-height:14px;">作者<span style='font-family:"Liberation Mono",monospace;font-size:11px;letter-spacing:-0.6px;line-height:0'>qq:2398387230 BiliBili:</span>课本中的小明<span style='font-family:"Liberation Mono",monospace;font-size:11px;letter-spacing:-0.6px;line-height:0'>&nbsp;&nbsp;</span>软件免费分享且严禁商用！</div>
<div class="a t " style="left:753px;top:727px;font-size:16px;line-height:16px;color:#2f8a55">连接成功</div>
</body></html>
